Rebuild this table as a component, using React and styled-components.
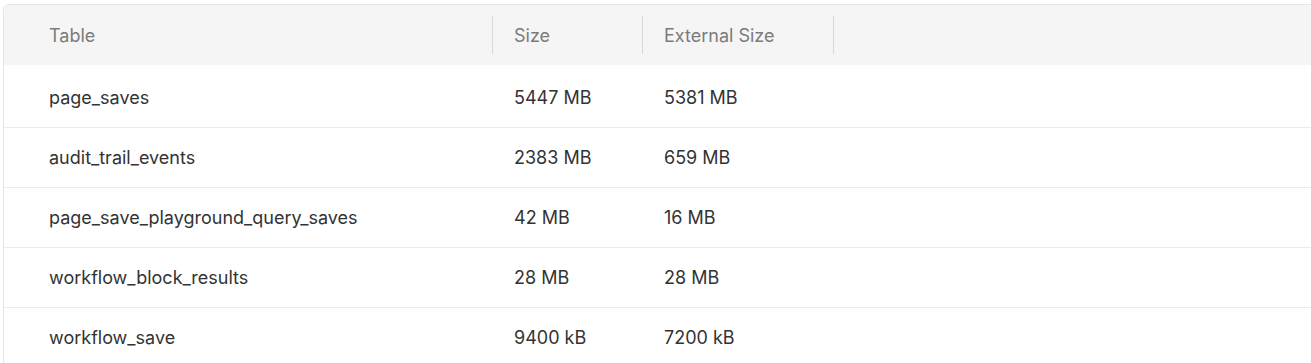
import React from "react";
import styled, { createGlobalStyle } from "styled-components";

const GlobalStyle = createGlobalStyle`
  html, body {
    margin: 0;
    padding: 0;
    background: #ffffff;
    overflow: hidden;
    font-family: Inter, "Noto Sans", Arial, sans-serif;
  }
`;

const Card = styled.div`
  margin: 4px 0 0 3px;
  width: calc(100% + 40px);
  border: 1px solid #e6e6e6;
  border-radius: 6px;
  overflow: hidden;
  background: #fff;
`;

const Row = styled.div`
  display: grid;
  grid-template-columns: 489px 150px 191px 1fr;
  align-items: center;
  height: ${(p) => (p.$head ? "60px" : "59px")};
  background: ${(p) => (p.$head ? "#f5f5f5" : "#fff")};
  border-bottom: ${(p) => (p.$head ? "3px solid #fff" : "1px solid #ebebeb")};
`;

const HeadCell = styled.div`
  height: 38px;
  display: flex;
  align-items: center;
  padding-left: ${(p) => (p.$first ? "45px" : "21px")};
  font-size: 18px;
  color: #7b7b7b;
  border-right: ${(p) => (p.$last ? "none" : "1px solid #d9d9d9")};
`;

const Cell = styled.div`
  padding-left: ${(p) => (p.$first ? "45px" : "21px")};
  font-size: 18px;
  color: #333333;
  white-space: nowrap;
`;

const rows = [
  ["page_saves", "5447 MB", "5381 MB"],
  ["audit_trail_events", "2383 MB", "659 MB"],
  ["page_save_playground_query_saves", "42 MB", "16 MB"],
  ["workflow_block_results", "28 MB", "28 MB"],
  ["workflow_save", "9400 kB", "7200 kB"],
];

export default function App() {
  return (
    <>
      <GlobalStyle />
      <Card>
        <Row $head>
          <HeadCell $first>Table</HeadCell>
          <HeadCell>Size</HeadCell>
          <HeadCell>External Size</HeadCell>
          <HeadCell $last />
        </Row>
        {rows.map(([name, size, ext]) => (
          <Row key={name}>
            <Cell $first>{name}</Cell>
            <Cell>{size}</Cell>
            <Cell>{ext}</Cell>
            <Cell />
          </Row>
        ))}
      </Card>
    </>
  );
}
